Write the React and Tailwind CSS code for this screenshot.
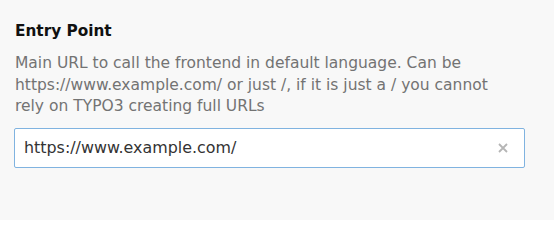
export default function App() {
  return (
    <div className="w-[554px] h-[220px] bg-[#f8f8f8] pt-[21px] pl-[15px]" style={{ fontFamily: '"DejaVu Sans", Verdana, sans-serif' }}>
      <div className="text-[15.3px] font-bold text-[#111] leading-[20px]">Entry Point</div>
      <p className="mt-[12px] w-[500px] text-[15.5px] leading-[21.5px] text-[#737373]">
        Main URL to call the frontend in default language. Can be https://www.example.com/ or just /, if it is just a / you cannot rely on TYPO3 creating full URLs
      </p>
      <div className="mt-[10px] -ml-px h-[40px] w-[511px] border border-[#80b3e0] bg-white rounded-[2px] flex items-center pl-[9px] pr-[16px]">
        <span className="flex-1 text-[15.9px] text-[#333]">https://www.example.com/</span>
        <svg width="10" height="10" viewBox="0 0 10 10" className="text-[#b5b5b5]">
          <path d="M1 1 L9 9 M9 1 L1 9" stroke="currentColor" strokeWidth="1.8" />
        </svg>
      </div>
    </div>
  );
}
